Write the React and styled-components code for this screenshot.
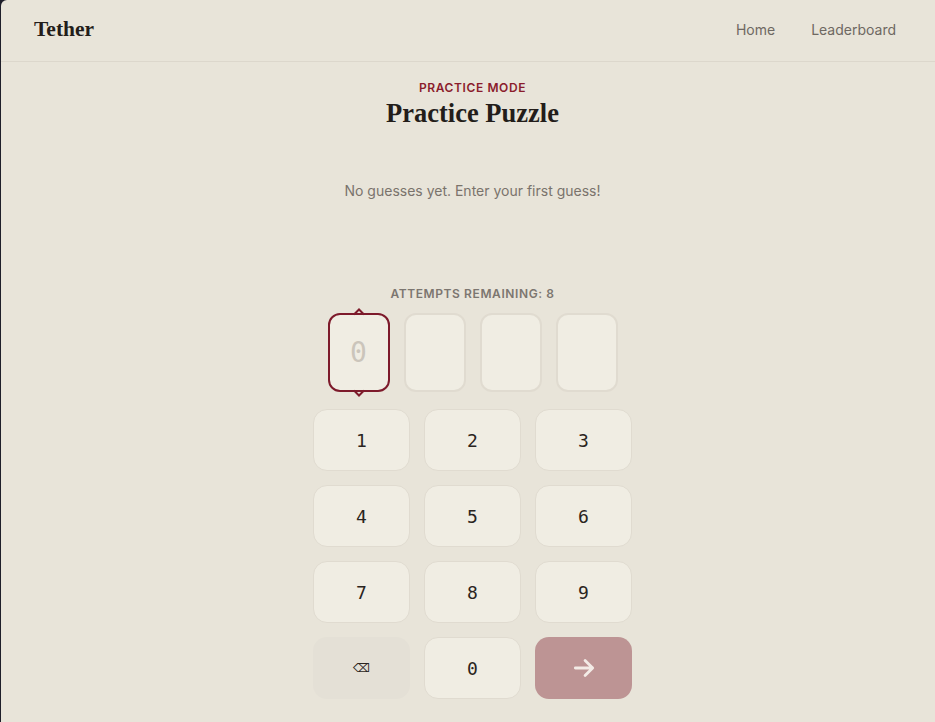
import styled, { createGlobalStyle } from 'styled-components'

const GlobalStyle = createGlobalStyle`
  html, body {
    margin: 0;
    padding: 0;
    background: #1e1e2a;
  }
  body {
    font-family: Inter, "Noto Sans", sans-serif;
  }
`

const Page = styled.div`
  margin-left: 1px;
  min-height: 722px;
  background: #e8e4d9;
  border-top-left-radius: 6px;
  display: flex;
  flex-direction: column;
`

const Header = styled.header`
  height: 61px;
  border-bottom: 1px solid #dcd7cc;
  display: flex;
  align-items: center;
  justify-content: space-between;
  padding: 0 39px 0 33px;

  .logo {
    font-family: "Liberation Serif", "DejaVu Serif", serif;
    font-weight: bold;
    font-size: 21.5px;
    color: #231d1a;
    margin-top: -2px;
  }
  nav {
    display: flex;
    gap: 36px;
    margin-top: -2px;
    a {
      font-size: 14px;
      color: #6e6862;
      text-decoration: none;
    }
  }
`

const Main = styled.main`
  display: flex;
  flex-direction: column;
  align-items: center;
  padding: 18px 0 0 9px;
`

const Eyebrow = styled.div`
  font-size: 12px;
  font-weight: 600;
  letter-spacing: 0.6px;
  color: #8b1c2c;
  text-transform: uppercase;
`

const Title = styled.h1`
  margin: 3px 0 0;
  font-family: "Liberation Serif", "DejaVu Serif", serif;
  font-weight: bold;
  font-size: 26.5px;
  color: #231d1a;
`

const Empty = styled.p`
  margin: 53px 0 0;
  font-size: 14px;
  color: #7a736c;
`

const Attempts = styled.div`
  margin-top: 87px;
  font-size: 12px;
  font-weight: 600;
  letter-spacing: 0.6px;
  color: #7c7670;
  text-transform: uppercase;
`

const Slots = styled.div`
  margin-top: 12px;
  display: flex;
  gap: 14px;
`

const Slot = styled.div`
  position: relative;
  width: 62px;
  height: 79px;
  box-sizing: border-box;
  border-radius: 12px;
  background: #f0ede3;
  border: 2px solid ${(p) => (p.active ? '#7d1a2b' : '#e0dbd0')};
  display: flex;
  align-items: center;
  justify-content: center;
  font-family: "DejaVu Sans Mono", "Liberation Mono", monospace;
  font-size: 28px;
  color: #cbc5bb;
`

const Caret = styled.svg`
  position: absolute;
  left: 50%;
  margin-left: -7px;
  ${(p) => (p.down ? 'bottom: -7px;' : 'top: -7px;')}
`

const Keypad = styled.div`
  margin-top: 17px;
  width: 319px;
  display: grid;
  grid-template-columns: repeat(3, 1fr);
  gap: 14px;
`

const Key = styled.button`
  height: 62px;
  border-radius: 14px;
  box-sizing: border-box;
  border: 1px solid ${(p) => (p.variant === 'digit' ? '#e0dbd0' : 'transparent')};
  background: ${(p) =>
    p.variant === 'submit' ? '#bd9494' : p.variant === 'back' ? '#e4e0d6' : '#f0ede3'};
  color: #2a2420;
  font-family: ${(p) =>
    p.variant === 'back' ? '"DejaVu Sans", sans-serif' : '"DejaVu Sans Mono", "Liberation Mono", monospace'};
  font-size: ${(p) => (p.variant === 'back' ? '12px' : '18px')};
  display: flex;
  align-items: center;
  justify-content: center;
  padding: 0;
  cursor: pointer;
`

const CaretIcon = ({ down }) => (
  <Caret down={down} width="14" height="8" viewBox="0 0 14 8">
    {down ? (
      <path d="M2 1.5 L7 6.5 L12 1.5" fill="none" stroke="#7d1a2b" strokeWidth="2" />
    ) : (
      <path d="M2 6.5 L7 1.5 L12 6.5" fill="none" stroke="#7d1a2b" strokeWidth="2" />
    )}
  </Caret>
)

export default function App() {
  const digits = ['1', '2', '3', '4', '5', '6', '7', '8', '9']
  return (
    <>
      <GlobalStyle />
      <Page>
        <Header>
          <span className='logo'>Tether</span>
          <nav>
            <a href='#'>Home</a>
            <a href='#'>Leaderboard</a>
          </nav>
        </Header>
        <Main>
          <Eyebrow>Practice Mode</Eyebrow>
          <Title>Practice Puzzle</Title>
          <Empty>No guesses yet. Enter your first guess!</Empty>
          <Attempts>Attempts remaining: 8</Attempts>
          <Slots>
            <Slot active>
              <CaretIcon />
              0
              <CaretIcon down />
            </Slot>
            <Slot />
            <Slot />
            <Slot />
          </Slots>
          <Keypad>
            {digits.map((d) => (
              <Key key={d} variant='digit'>{d}</Key>
            ))}
            <Key variant='back'>⌫</Key>
            <Key variant='digit'>0</Key>
            <Key variant='submit'>
              <svg width="26" height="26" viewBox="0 0 24 24" fill="none" stroke="#f3ebe6" strokeWidth="2.6" strokeLinecap="round" strokeLinejoin="round">
                <path d="M4 12h16M13 5l7 7-7 7" />
              </svg>
            </Key>
          </Keypad>
        </Main>
      </Page>
    </>
  )
}
